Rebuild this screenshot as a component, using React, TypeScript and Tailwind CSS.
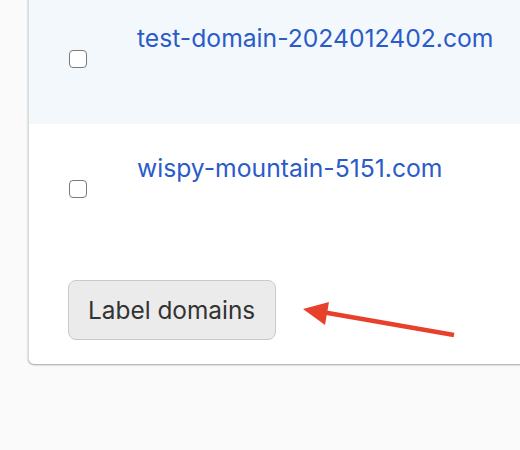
const domains = [
  { name: "test-domain-2024012402.com", highlighted: true },
  { name: "wispy-mountain-5151.com", highlighted: false },
];

function DomainRow({ name, highlighted }: { name: string; highlighted: boolean }) {
  return (
    <div className={`flex h-[130px] ${highlighted ? "bg-[#f3f8fd]" : "bg-white"}`}>
      <div className="flex items-center pl-[40px] pr-[50px]">
        <input
          type="checkbox"
          className="appearance-none w-[18px] h-[18px] rounded-[4px] border-[1.5px] border-[#7a7a7a] bg-white"
        />
      </div>
      <div className="pt-[30px]">
        <a href="#" className="text-[24.7px] leading-[29px] text-[#2b5bc9]">
          {name}
        </a>
      </div>
    </div>
  );
}

export default function App() {
  return (
    <div
      className="relative h-[450px] w-[520px] overflow-hidden bg-[#fafafa]"
      style={{ fontFamily: "Inter, 'Liberation Sans', sans-serif" }}
    >
      <div className="-mt-[6px] ml-[28px] w-[520px] rounded-bl-[6px] border-l border-[#dadada] bg-white shadow-[0_1px_2px_rgba(0,0,0,0.35)]">
        {domains.map((d) => (
          <DomainRow key={d.name} {...d} />
        ))}
        <div className="pl-[39px] pt-[26px] pb-[24px]">
          <button className="h-[60px] w-[208px] rounded-[8px] border border-[#cacaca] bg-[#ebebeb] text-left pl-[19px] text-[24.4px] text-[#333333]">
            Label domains
          </button>
        </div>
      </div>

      <svg className="absolute left-0 top-0" width="520" height="450" viewBox="0 0 520 450">
        <line x1="454" y1="335" x2="322" y2="312" stroke="#e8412b" strokeWidth="4.5" />
        <polygon points="303,309 329,302 325,325" fill="#e8412b" />
      </svg>
    </div>
  );
}
